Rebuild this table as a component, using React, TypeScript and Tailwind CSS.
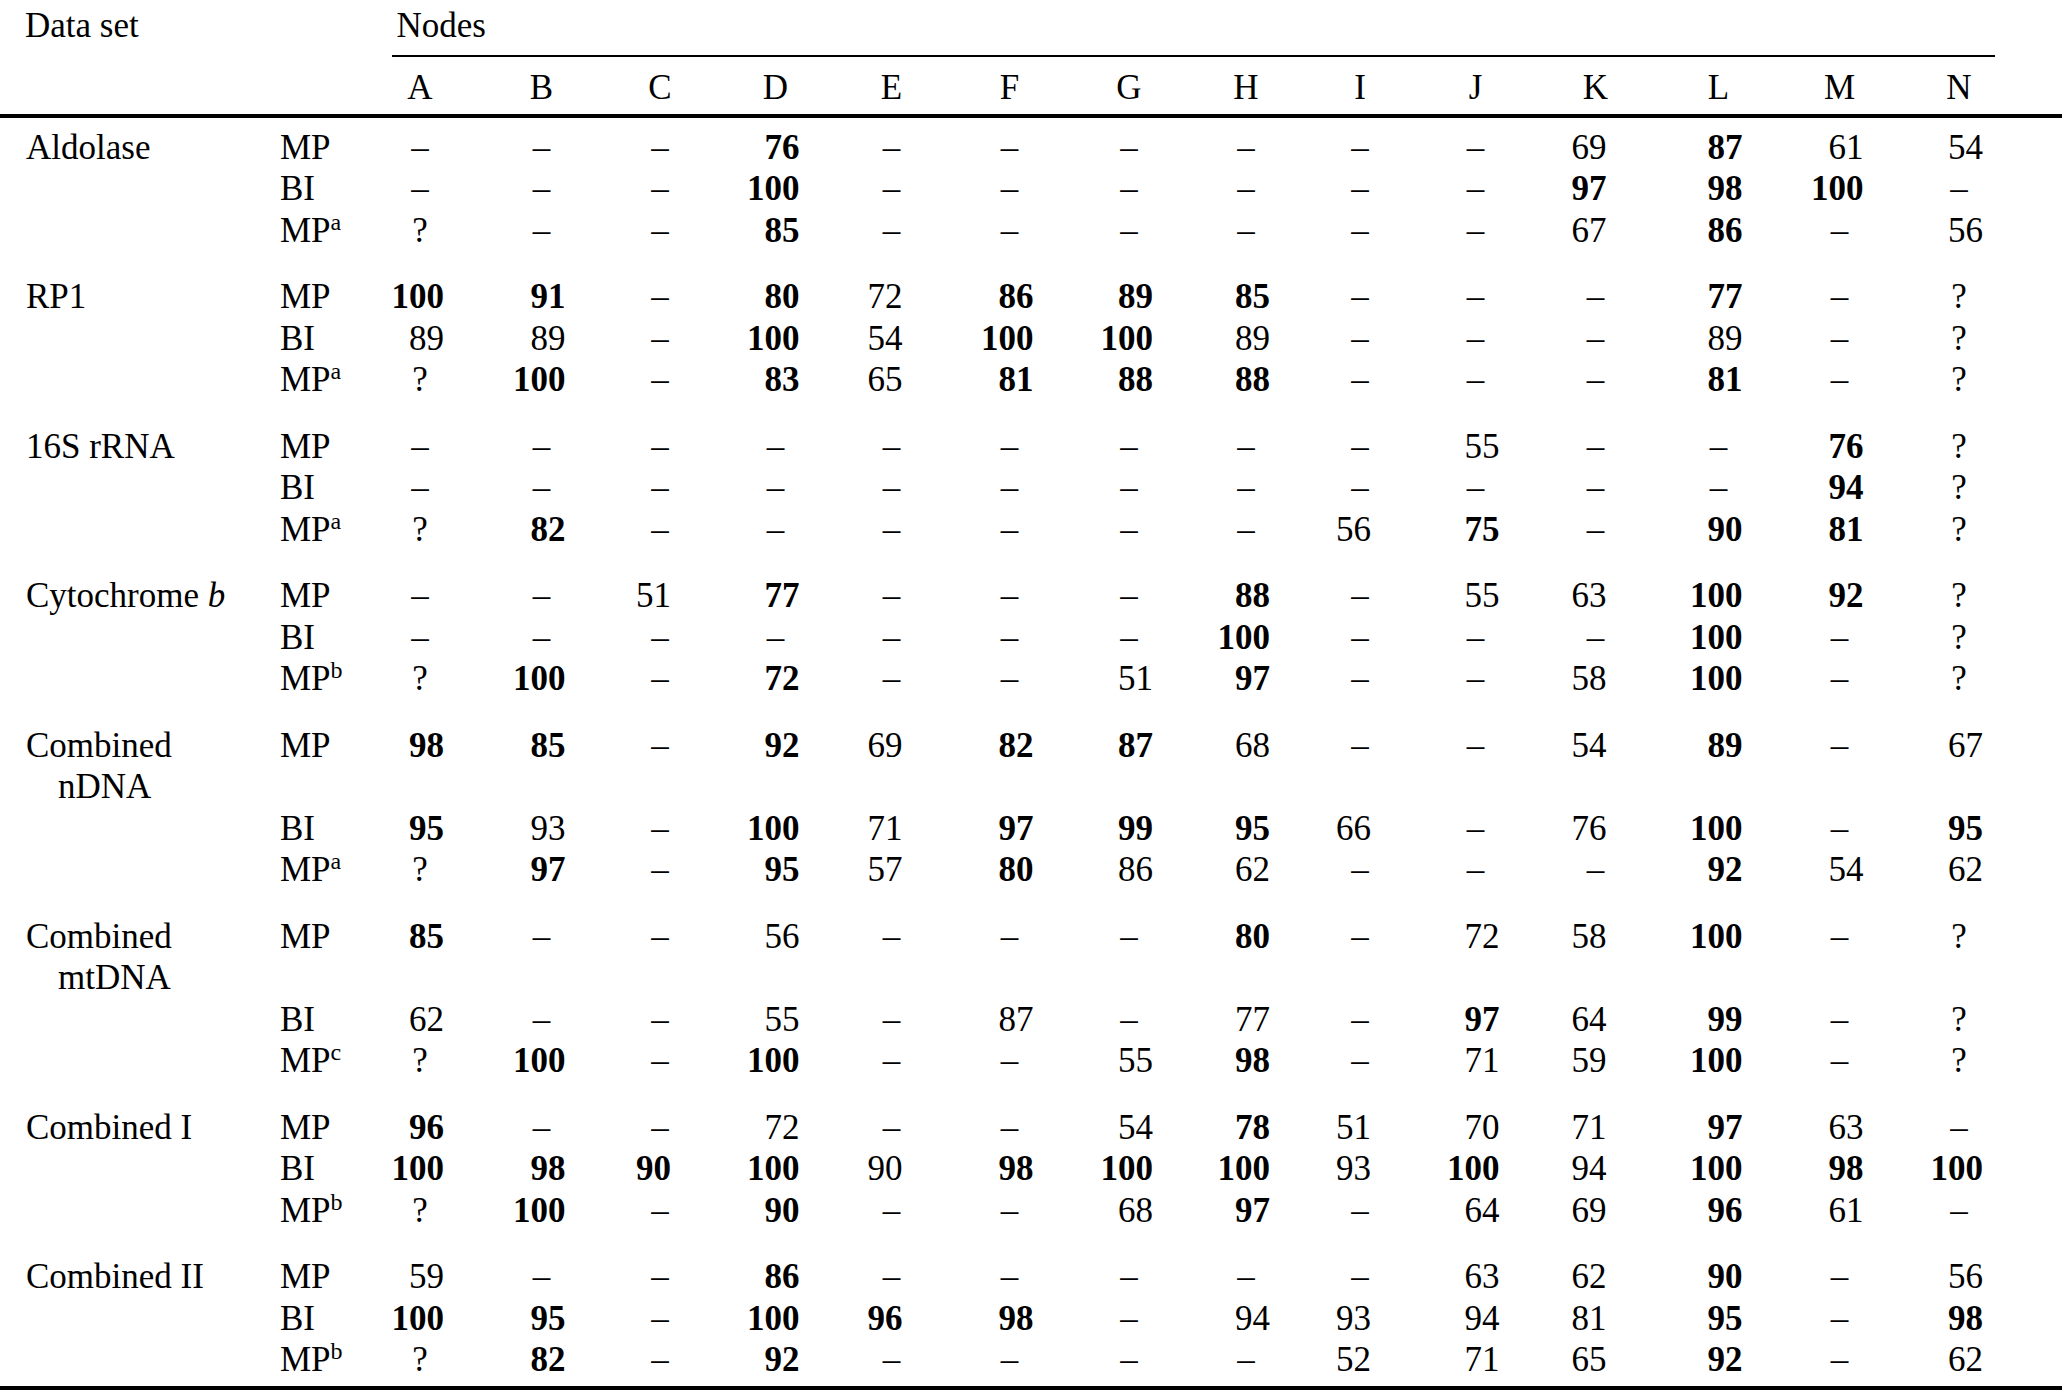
import React from "react";

const COLS =
  "grid grid-cols-[280px_79px_122px_121px_116px_115px_117px_119px_120px_114px_114px_117px_123px_123px_119px_120px]";

const LETTERS = ["A", "B", "C", "D", "E", "F", "G", "H", "I", "J", "K", "L", "M", "N"];
const WIDE = [true, true, false, true, false, true, true, true, false, true, false, true, true, true];

type Row = { m: string; sup?: string; v: string[] };
type Group = { label: string[]; italic?: string; rows: Row[] };

const D = "–";

const GROUPS: Group[] = [
  {
    label: ["Aldolase"],
    rows: [
      { m: "MP", v: [D, D, D, "*76", D, D, D, D, D, D, "69", "*87", "61", "54"] },
      { m: "BI", v: [D, D, D, "*100", D, D, D, D, D, D, "*97", "*98", "*100", D] },
      { m: "MP", sup: "a", v: ["?", D, D, "*85", D, D, D, D, D, D, "67", "*86", D, "56"] },
    ],
  },
  {
    label: ["RP1"],
    rows: [
      { m: "MP", v: ["*100", "*91", D, "*80", "72", "*86", "*89", "*85", D, D, D, "*77", D, "?"] },
      { m: "BI", v: ["89", "89", D, "*100", "54", "*100", "*100", "89", D, D, D, "89", D, "?"] },
      { m: "MP", sup: "a", v: ["?", "*100", D, "*83", "65", "*81", "*88", "*88", D, D, D, "*81", D, "?"] },
    ],
  },
  {
    label: ["16S rRNA"],
    rows: [
      { m: "MP", v: [D, D, D, D, D, D, D, D, D, "55", D, D, "*76", "?"] },
      { m: "BI", v: [D, D, D, D, D, D, D, D, D, D, D, D, "*94", "?"] },
      { m: "MP", sup: "a", v: ["?", "*82", D, D, D, D, D, D, "56", "*75", D, "*90", "*81", "?"] },
    ],
  },
  {
    label: ["Cytochrome "],
    italic: "b",
    rows: [
      { m: "MP", v: [D, D, "51", "*77", D, D, D, "*88", D, "55", "63", "*100", "*92", "?"] },
      { m: "BI", v: [D, D, D, D, D, D, D, "*100", D, D, D, "*100", D, "?"] },
      { m: "MP", sup: "b", v: ["?", "*100", D, "*72", D, D, "51", "*97", D, D, "58", "*100", D, "?"] },
    ],
  },
  {
    label: ["Combined", "nDNA"],
    rows: [
      { m: "MP", v: ["*98", "*85", D, "*92", "69", "*82", "*87", "68", D, D, "54", "*89", D, "67"] },
      { m: "BI", v: ["*95", "93", D, "*100", "71", "*97", "*99", "*95", "66", D, "76", "*100", D, "*95"] },
      { m: "MP", sup: "a", v: ["?", "*97", D, "*95", "57", "*80", "86", "62", D, D, D, "*92", "54", "62"] },
    ],
  },
  {
    label: ["Combined", "mtDNA"],
    rows: [
      { m: "MP", v: ["*85", D, D, "56", D, D, D, "*80", D, "72", "58", "*100", D, "?"] },
      { m: "BI", v: ["62", D, D, "55", D, "87", D, "77", D, "*97", "64", "*99", D, "?"] },
      { m: "MP", sup: "c", v: ["?", "*100", D, "*100", D, D, "55", "*98", D, "71", "59", "*100", D, "?"] },
    ],
  },
  {
    label: ["Combined I"],
    rows: [
      { m: "MP", v: ["*96", D, D, "72", D, D, "54", "*78", "51", "70", "71", "*97", "63", D] },
      { m: "BI", v: ["*100", "*98", "*90", "*100", "90", "*98", "*100", "*100", "93", "*100", "94", "*100", "*98", "*100"] },
      { m: "MP", sup: "b", v: ["?", "*100", D, "*90", D, D, "68", "*97", D, "64", "69", "*96", "61", D] },
    ],
  },
  {
    label: ["Combined II"],
    rows: [
      { m: "MP", v: ["59", D, D, "*86", D, D, D, D, D, "63", "62", "*90", D, "56"] },
      { m: "BI", v: ["*100", "*95", D, "*100", "*96", "*98", D, "94", "93", "94", "81", "*95", D, "*98"] },
      { m: "MP", sup: "b", v: ["?", "*82", D, "*92", D, D, D, D, "52", "71", "65", "*92", D, "62"] },
    ],
  },
];

function Cell({ v, wide }: { v: string; wide: boolean }) {
  if (v === D || v === "?") {
    return <div className="flex justify-center">{v}</div>;
  }
  const bold = v.startsWith("*");
  const t = bold ? v.slice(1) : v;
  return (
    <div className="flex justify-center">
      <div className={wide ? "flex justify-end w-[48px]" : "flex justify-end w-[22px]"}>
        <span className={bold ? "font-bold whitespace-nowrap" : "whitespace-nowrap"}>{t}</span>
      </div>
    </div>
  );
}

function Method({ r }: { r: Row }) {
  return (
    <div className="whitespace-nowrap">
      {r.m}
      {r.sup ? <sup className="text-[24px]">{r.sup}</sup> : null}
    </div>
  );
}

function GroupBlock({ g }: { g: Group }) {
  const two = g.label.length > 1;
  return (
    <div className="flex flex-col">
      {g.rows.map((r, i) => (
        <React.Fragment key={i}>
          <div className={`${COLS} h-[41.5px] leading-[41.5px]`}>
            <div className="pl-[26px] whitespace-nowrap">
              {i === 0 ? (
                <>
                  {g.label[0]}
                  {g.italic ? <i>{g.italic}</i> : null}
                </>
              ) : null}
            </div>
            <Method r={r} />
            {r.v.map((v, j) => (
              <Cell key={j} v={v} wide={WIDE[j]} />
            ))}
          </div>
          {two && i === 0 ? (
            <div className={`${COLS} h-[41.5px] leading-[41.5px]`}>
              <div className="pl-[58px] whitespace-nowrap">{g.label[1]}</div>
            </div>
          ) : null}
        </React.Fragment>
      ))}
    </div>
  );
}

export default function App() {
  return (
    <div className="w-full min-h-[1394px] bg-white text-black font-['Liberation_Serif','Times_New_Roman',serif] text-[35px] pt-[5.4px]">
      {/* header row 1 */}
      <div className={`${COLS} leading-[41.5px]`}>
        <div className="pl-[25px] whitespace-nowrap h-[41.5px]">Data set</div>
        <div />
        <div className="col-span-14">
          <div className="ml-[32.5px] mr-[24px] border-b-2 border-black h-[51.5px] pl-[5px]">Nodes</div>
        </div>
      </div>
      {/* header row 2: letters */}
      <div className={`${COLS} h-[41.5px] leading-[41.5px] mt-[10px]`}>
        <div />
        <div />
        {LETTERS.map((l) => (
          <div key={l} className="flex justify-center">
            {l}
          </div>
        ))}
      </div>
      <div className="mt-[5.5px] h-[4px] bg-black" />
      <div className="mt-[9px] flex flex-col gap-[25px]">
        {GROUPS.map((g, i) => (
          <GroupBlock key={i} g={g} />
        ))}
      </div>
      <div className="mt-[5px] h-[4px] bg-black" />
    </div>
  );
}
